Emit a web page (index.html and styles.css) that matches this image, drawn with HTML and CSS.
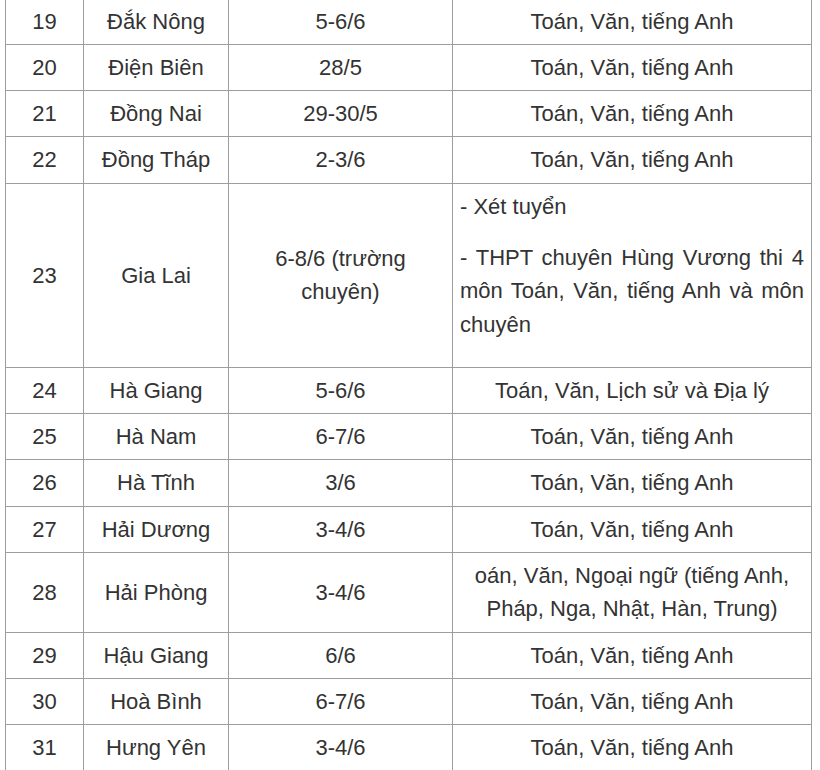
FILE: index.html
```html
<!DOCTYPE html>
<html lang="vi">
<head>
<meta charset="utf-8">
<link rel="stylesheet" href="styles.css">
</head>
<body>
<table class="schedule">
  <colgroup>
    <col class="c-no"><col class="c-prov"><col class="c-date"><col class="c-subj">
  </colgroup>
  <tbody>
    <tr><td>19</td><td>Đắk Nông</td><td>5-6/6</td><td>Toán, Văn, tiếng Anh</td></tr>
    <tr><td>20</td><td>Điện Biên</td><td>28/5</td><td>Toán, Văn, tiếng Anh</td></tr>
    <tr><td>21</td><td>Đồng Nai</td><td>29-30/5</td><td>Toán, Văn, tiếng Anh</td></tr>
    <tr><td>22</td><td>Đồng Tháp</td><td>2-3/6</td><td>Toán, Văn, tiếng Anh</td></tr>
    <tr>
      <td>23</td><td>Gia Lai</td><td>6-8/6 (trường chuyên)</td>
      <td class="left"><p>- Xét tuyển</p><p class="just">- THPT chuyên Hùng Vương thi 4 môn Toán, Văn, tiếng Anh và môn chuyên</p></td>
    </tr>
    <tr><td>24</td><td>Hà Giang</td><td>5-6/6</td><td>Toán, Văn, Lịch sử và Địa lý</td></tr>
    <tr><td>25</td><td>Hà Nam</td><td>6-7/6</td><td>Toán, Văn, tiếng Anh</td></tr>
    <tr><td>26</td><td>Hà Tĩnh</td><td>3/6</td><td>Toán, Văn, tiếng Anh</td></tr>
    <tr><td>27</td><td>Hải Dương</td><td>3-4/6</td><td>Toán, Văn, tiếng Anh</td></tr>
    <tr><td>28</td><td>Hải Phòng</td><td>3-4/6</td><td>oán, Văn, Ngoại ngữ (tiếng Anh, Pháp, Nga, Nhật, Hàn, Trung)</td></tr>
    <tr><td>29</td><td>Hậu Giang</td><td>6/6</td><td>Toán, Văn, tiếng Anh</td></tr>
    <tr><td>30</td><td>Hoà Bình</td><td>6-7/6</td><td>Toán, Văn, tiếng Anh</td></tr>
    <tr><td>31</td><td>Hưng Yên</td><td>3-4/6</td><td>Toán, Văn, tiếng Anh</td></tr>
  </tbody>
</table>
</body>
</html>
```
FILE: styles.css
```css
html, body {
  margin: 0;
  padding: 0;
  background: #fff;
}
body {
  font-family: "Liberation Sans", Arial, sans-serif;
  font-size: 22px;
  line-height: 33.3px;
  color: #333;
  overflow: hidden;
}
.schedule {
  border-collapse: collapse;
  table-layout: fixed;
  width: 806px;
  margin: -2.5px 0 0 5px;
}
.c-no { width: 78px; }
.c-prov { width: 145px; }
.c-date { width: 224px; }
.c-subj { width: 359px; }
.schedule td {
  border: 1px solid #9d9d9d;
  padding: 6px 7px;
  text-align: center;
  vertical-align: middle;
}
.schedule td.left {
  text-align: left;
}
.schedule p {
  margin: 0 0 18px;
}
.schedule p:last-child {
  margin-bottom: 20px;
}
.schedule p.just {
  text-align: justify;
}
```
